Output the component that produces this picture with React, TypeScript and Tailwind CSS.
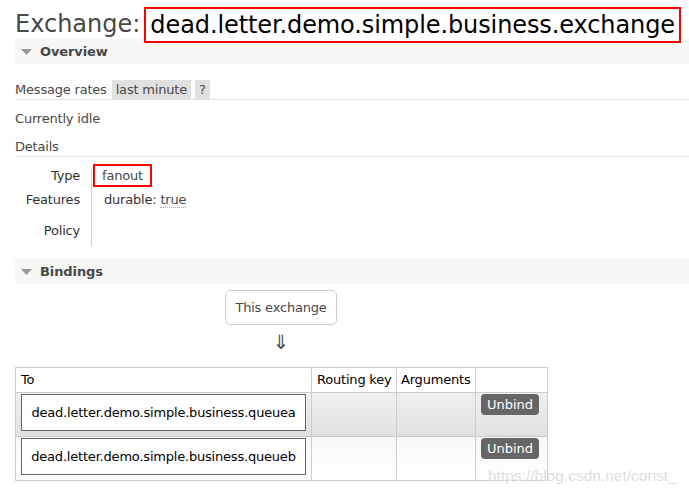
import React from "react";

const font = { fontFamily: '"DejaVu Sans", Verdana, sans-serif' };

function Tri() {
  return (
    <svg width="11" height="6" viewBox="0 0 11 6" className="shrink-0">
      <polygon points="0,0 11,0 5.5,6" fill="#999" />
    </svg>
  );
}

function SectionBar({ title }: { title: string }) {
  return (
    <div className="h-[25px] bg-[#f7f7f7] flex items-center pl-[6px]">
      <Tri />
      <span className="ml-[8px] text-[13px] font-bold text-[#484848] leading-none tracking-[-0.1px]">{title}</span>
    </div>
  );
}

export default function App() {
  return (
    <div
      className="w-[689px] h-[495px] bg-white relative overflow-hidden pl-[15px] text-[13px] text-[#484848] tracking-[-0.2px]"
      style={font}
    >
      {/* Title */}
      <div className="h-[39px] flex items-start">
        <span className="text-[24px] leading-[30px] mt-[9px] text-[#484848] tracking-[0px]">Exchange:</span>
        <span className="relative z-10 ml-[4px] mt-[7px] h-[36px] border-2 border-[#f00] bg-white flex items-center px-[4px] text-[24px] text-black tracking-[-0.1px] leading-none whitespace-nowrap">
          dead.letter.demo.simple.business.exchange
        </span>
      </div>

      <SectionBar title="Overview" />

      {/* Message rates */}
      <div className="mt-[16px] h-[20px] flex items-stretch border-b border-[#e0e0e0]">
        <span className="leading-[19px] text-[#484848]">Message rates</span>
        <span className="ml-[5px] h-[19px] bg-[#e0e0e0] px-[4px] leading-[19px] text-[#484848]">last minute</span>
        <span className="ml-[4px] h-[19px] bg-[#e0e0e0] px-[4px] leading-[19px] text-[#484848]">?</span>
      </div>

      <div className="mt-[10px] h-[18px] leading-[18px]">Currently idle</div>

      <div className="mt-[9px] h-[20px] leading-[19px] border-b border-[#e0e0e0]">Details</div>

      {/* Details grid */}
      <div className="mt-[7px] grid grid-cols-[65px_1px_1fr] gap-x-[11px] w-fit">
        <div className="h-[23px] flex items-center justify-end text-[#333]">Type</div>
        <div className="row-span-3 mt-[5px] bg-[#ccc] w-px"></div>
        <div className="h-[23px] flex items-center -ml-[10px]">
          <span className="h-[23px] border-2 border-[#f00] px-[7px] flex items-center text-[#484848]">fanout</span>
        </div>

        <div className="h-[26px] flex items-center justify-end text-[#333]">Features</div>
        <div className="h-[26px] flex items-center ml-[1px]">
          <span className="text-[#333]">durable:</span>
          <span className="ml-[4px] text-[#484848] border-b border-dotted border-[#aaa] leading-[15px]">true</span>
        </div>

        <div className="h-[33px] pt-[9px] leading-[18px] text-right text-[#333]">Policy</div>
        <div className="h-[33px]"></div>
      </div>

      <div className="mt-[13px]">
        <SectionBar title="Bindings" />
      </div>

      {/* This exchange */}
      <div className="ml-[210px] mt-[6px] w-[112px]">
        <div className="h-[35px] border border-[#ccc] rounded-[5px] flex items-center justify-center text-[#484848]">
          This exchange
        </div>
        <div className="mt-[7px] h-[20px] text-center text-[20px] leading-[20px] text-[#484848]">⇓</div>
      </div>

      {/* Table */}
      <table className="mt-[15px] border-collapse table-fixed w-[533px]">
        <colgroup>
          <col className="w-[296px]" />
          <col className="w-[85px]" />
          <col className="w-[79px]" />
          <col className="w-[72px]" />
        </colgroup>
        <thead>
          <tr className="h-[25px]">
            <th className="border border-[#ccc] text-left font-normal pl-[5px] text-black">To</th>
            <th className="border border-[#ccc] text-left font-normal pl-[5px] text-black whitespace-nowrap">Routing key</th>
            <th className="border border-[#ccc] text-left font-normal pl-[4px] text-black">Arguments</th>
            <th className="border border-[#ccc]"></th>
          </tr>
        </thead>
        <tbody>
          {[
            { q: "dead.letter.demo.simple.business.queuea", bg: "bg-gradient-to-b from-[#f0f0f0] to-[#e0e0e0]" },
            { q: "dead.letter.demo.simple.business.queueb", bg: "bg-gradient-to-b from-[#f8f8f8] to-[#ffffff]" },
          ].map((r, i) => (
            <tr key={i} className={`h-[44px] ${r.bg}`}>
              <td className="border border-[#ccc] align-top pl-[5px] pt-[1px] pb-[5px]">
                <div className="w-[285px] h-[37px] border border-[#666] bg-white flex items-center justify-center text-black whitespace-nowrap">
                  {r.q}
                </div>
              </td>
              <td className="border border-[#ccc]"></td>
              <td className="border border-[#ccc]"></td>
              <td className="border border-[#ccc] align-top pl-[5px] pt-[1px]">
                <div className="w-[58px] h-[21px] rounded-[4px] bg-[#666] text-white flex items-center justify-center tracking-[0px]">
                  Unbind
                </div>
              </td>
            </tr>
          ))}
        </tbody>
      </table>

      {/* watermark */}
      <div
        className="absolute left-[488px] top-[467px] text-[15.5px] leading-[18px] text-[#dedede] pointer-events-none tracking-[0px]"
        style={{ fontFamily: '"Liberation Sans", Arial, sans-serif' }}
      >
        https://blog.csdn.net/const_
      </div>
    </div>
  );
}
